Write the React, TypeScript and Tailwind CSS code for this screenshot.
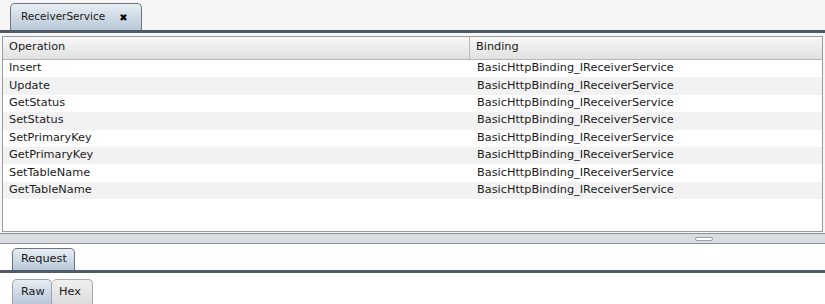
import React from 'react';

const operations = [
    'Insert',
    'Update',
    'GetStatus',
    'SetStatus',
    'SetPrimaryKey',
    'GetPrimaryKey',
    'SetTableName',
    'GetTableName',
];

const font = { fontFamily: '"DejaVu Sans", Verdana, sans-serif' };

const App = () => {
    return (
        <div className="w-[825px] h-[304px] overflow-hidden bg-[#f6f6f6] text-[11.3px] text-[#1a1a1a]" style={font}>
            {/* Top tab strip */}
            <div className="h-[33px] flex items-end pl-[10px] border-b-[3px] border-b-[#4f5b66]">
                <div className="w-[132px] h-[27px] rounded-t-[5px] border border-b-0 border-[#6b7580] bg-gradient-to-b from-[#e8eef4] to-[#b8c8d8] flex items-center pl-[10px] gap-[14px]">
                    <span className="text-[10.5px]">ReceiverService</span>
                    <span className="text-[10px] font-bold text-black">✖</span>
                </div>
            </div>

            {/* Operations table */}
            <div className="px-[2px] pt-[3px]">
                <div className="h-[196px] border border-[#9b9b9b] bg-white">
                    <div className="flex h-[23px] border-b border-[#b5b5b5] bg-gradient-to-b from-[#f7f7f7] to-[#e1e1e1]">
                        <div className="w-[467px] border-r border-[#b9b9b9] pl-[6px] pb-[2px] flex items-center">Operation</div>
                        <div className="flex-1 pl-[6px] pb-[2px] flex items-center">Binding</div>
                    </div>
                    {operations.map((op, i) => (
                        <div
                            key={op}
                            className={`flex h-[17.4px] items-center ${i % 2 === 1 ? 'bg-[#f2f2f2]' : 'bg-white'}`}
                        >
                            <div className="w-[468px] pl-[6px]">{op}</div>
                            <div className="flex-1 pl-[6px]">BasicHttpBinding_IReceiverService</div>
                        </div>
                    ))}
                </div>
            </div>

            {/* Splitter */}
            <div className="mt-[1px] h-[11px] border-t border-b border-[#8c8f94] bg-[#d9dce1] flex justify-end pr-[112px] items-center">
                <div className="w-[18px] h-[4px] rounded-full border border-[#9a9ea5] bg-white" />
            </div>

            {/* Request area */}
            <div className="bg-white">
                <div className="h-[29px] flex items-end pl-[12px] border-b-[3px] border-b-[#4f5b66]">
                    <div className="w-[63px] h-[22px] rounded-t-[5px] border border-b-0 border-[#6b7580] bg-gradient-to-b from-[#e8eef4] to-[#b8c8d8] flex items-center pl-[8px]">
                        Request
                    </div>
                </div>
                <div className="h-[32px] flex items-end pl-[12px] border-b border-[#a9b6c3]">
                    <div className="w-[40px] h-[25px] rounded-t-[5px] border border-b-0 border-[#9aa4ae] bg-gradient-to-b from-[#e8eef4] to-[#b8c8d8] flex items-center pl-[8px]">
                        Raw
                    </div>
                    <div className="w-[41px] h-[25px] rounded-t-[5px] border border-b-0 border-l-0 border-[#aaaaaa] bg-gradient-to-b from-[#f0f0f0] to-[#dcdcdc] flex items-center pl-[7px]">
                        Hex
                    </div>
                </div>
            </div>
        </div>
    );
};

export default App;
